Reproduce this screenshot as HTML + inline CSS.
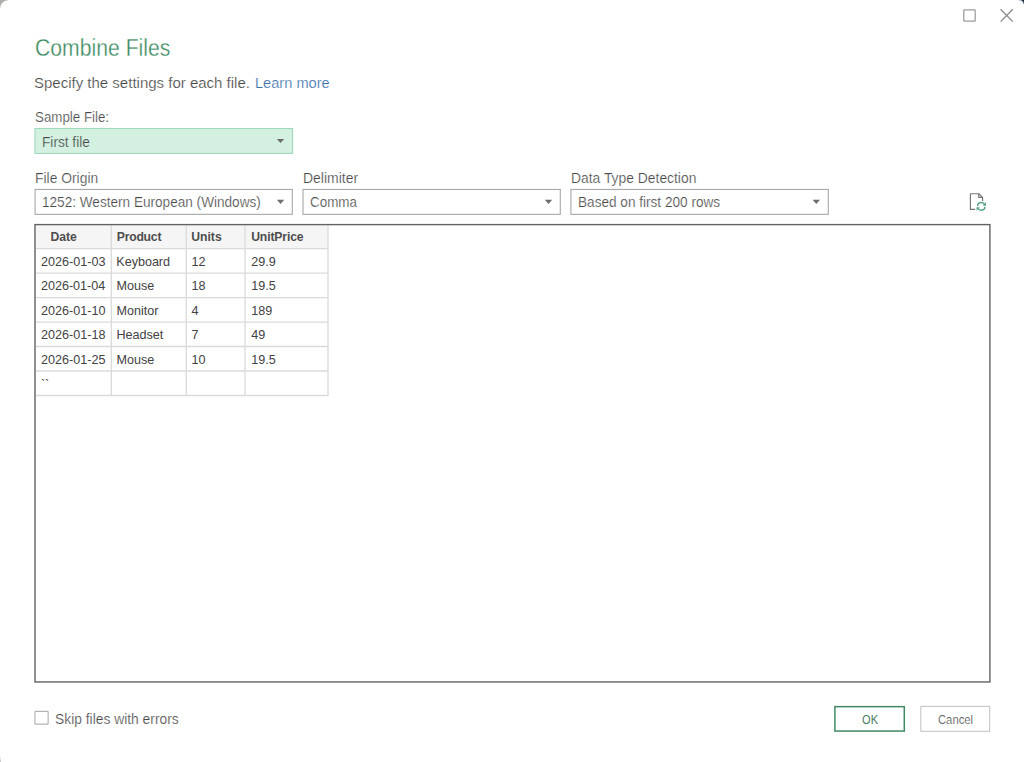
<!DOCTYPE html>
<html>
<head>
<meta charset="utf-8">
<title>Combine Files</title>
<style>
html,body{margin:0;padding:0;}
body{width:1024px;height:762px;overflow:hidden;background:#fff;font-family:"Liberation Sans", sans-serif;position:relative;}
#shapes{position:absolute;left:0;top:0;}
.t{position:absolute;white-space:nowrap;line-height:1;}
.t a{color:#3d72ad;text-decoration:none;}
</style>
</head>
<body>
<svg id="shapes" width="1024" height="762" viewBox="0 0 1024 762">
<!-- backdrop corners -->
<path d="M0 0 H8.8 A8.8 8.8 0 0 0 0 8.8 Z" fill="#b1aeab"/>
<path d="M1024 0 H1017.6 A7 7 0 0 1 1024 4.9 Z" fill="#8fa9d3"/><path d="M1024 0 H1021.3 A5 5 0 0 1 1024 4.3 Z" fill="#2a2a2a"/>
<path d="M0 762 V755 Q0.2 760 1.2 762 Z" fill="#c9c9c9"/>
<!-- window controls -->
<rect x="963.8" y="9.8" width="11.4" height="11.2" rx="0.6" fill="none" stroke="#9c9c9c" stroke-width="1.25"/>
<path d="M1000.6 9.2 L1012.8 21.6 M1012.8 9.2 L1000.6 21.6" fill="none" stroke="#8a8a8a" stroke-width="1.3"/>
<!-- dropdowns -->
<rect x="34.95" y="128.5" width="257.65" height="24.9" fill="#d3f0e0" stroke="#a2d9bc" stroke-width="1.1"/>
<rect x="35.1" y="189.45" width="257.2" height="24.9" fill="#fff" stroke="#ababab" stroke-width="1.15"/>
<rect x="303.0" y="189.45" width="257.3" height="24.9" fill="#fff" stroke="#ababab" stroke-width="1.15"/>
<rect x="570.9" y="189.45" width="257.4" height="24.9" fill="#fff" stroke="#ababab" stroke-width="1.15"/>
<path d="M276.8 139.0 L284.2 139.0 L280.5 143.1 Z" fill="#6e6e6e"/><path d="M276.85 199.8 L284.25 199.8 L280.55 203.9 Z" fill="#6e6e6e"/><path d="M544.8 199.8 L552.2 199.8 L548.5 203.9 Z" fill="#6e6e6e"/><path d="M812.5999999999999 199.8 L820.0 199.8 L816.3 203.9 Z" fill="#6e6e6e"/>
<!-- preview -->
<rect x="36.2" y="225.3" width="291.8" height="23.299999999999983" fill="#f5f5f5"/>
<g stroke="#dadada" stroke-width="1.3"><line x1="111.3" y1="225.2" x2="111.3" y2="396.08"/><line x1="186.25" y1="225.2" x2="186.25" y2="396.08"/><line x1="245.0" y1="225.2" x2="245.0" y2="396.08"/><line x1="328.0" y1="225.2" x2="328.0" y2="396.08"/><line x1="35.8" y1="248.60" x2="328.65" y2="248.60"/><line x1="35.8" y1="273.08" x2="328.65" y2="273.08"/><line x1="35.8" y1="297.56" x2="328.65" y2="297.56"/><line x1="35.8" y1="322.04" x2="328.65" y2="322.04"/><line x1="35.8" y1="346.52" x2="328.65" y2="346.52"/><line x1="35.8" y1="371.00" x2="328.65" y2="371.00"/><line x1="35.8" y1="395.48" x2="328.65" y2="395.48"/></g>
<rect x="35.0" y="224.6" width="954.9" height="457.35" fill="none" stroke="#636363" stroke-width="1.4"/>
<!-- refresh icon -->
<path d="M982.6 200.9 V197.3 L978.8 193.7 H970.4 V209.4 H975.2 M978.7 193.9 V197.4 H982.5" fill="none" stroke="#757575" stroke-width="1.15" stroke-linejoin="round"/>
<g fill="none" stroke="#55a583" stroke-width="1.4">
<path d="M977.5 205.9 A3.8 3.8 0 0 1 984.8 204.9"/>
<path d="M985.1 206.9 A3.8 3.8 0 0 1 977.8 207.9"/>
</g>
<path d="M986.1 202.3 L985.9 205.9 L982.7 205.2 Z" fill="#55a583"/>
<path d="M976.5 210.5 L976.7 206.9 L979.9 207.6 Z" fill="#55a583"/>
<!-- checkbox -->
<rect x="34.95" y="711.3" width="13.2" height="12.8" rx="0.6" fill="#fff" stroke="#b4b4b4" stroke-width="1.2"/>
<!-- buttons -->
<rect x="834.9" y="706.65" width="69.4" height="24.4" fill="#fff" stroke="#3f8a63" stroke-width="1.5"/>
<rect x="920.8" y="706.4" width="68.9" height="24.9" fill="#fff" stroke="#c6c6c6" stroke-width="1.1"/>
</svg>
<div class="t" id="title" style="left:35.0px;top:37.00px;font-size:23.5px;color:#3b8a5e;letter-spacing:0px;transform:scaleX(0.9015);transform-origin:0 0;-webkit-text-stroke:0.32px #fff;">Combine Files</div>
<div class="t" id="sub1" style="left:34.0px;top:75.00px;font-size:15.5px;color:#484848;letter-spacing:0px;transform:scaleX(0.9677);transform-origin:0 0;-webkit-text-stroke:0.22px #fff;">Specify the settings for each file.</div>
<div class="t" id="sub2" style="left:255.0px;top:75.00px;font-size:15.5px;color:#3d72ad;letter-spacing:0px;transform:scaleX(0.9422);transform-origin:0 0;-webkit-text-stroke:0.22px #fff;"><a>Learn more</a></div>
<div class="t" id="l0" style="left:35.0px;top:110.00px;font-size:14.3px;color:#484848;letter-spacing:0px;transform:scaleX(0.9321);transform-origin:0 0;-webkit-text-stroke:0.22px #fff;">Sample File:</div>
<div class="t" id="v0" style="left:42.0px;top:134.50px;font-size:14.3px;color:#484848;letter-spacing:0px;transform:scaleX(0.9557);transform-origin:0 0;-webkit-text-stroke:0.22px #d3f0e0;">First file</div>
<div class="t" id="l1" style="left:35.0px;top:171.00px;font-size:14.3px;color:#484848;letter-spacing:0px;transform:scaleX(0.9697);transform-origin:0 0;-webkit-text-stroke:0.22px #fff;">File Origin</div>
<div class="t" id="l2" style="left:303.0px;top:171.00px;font-size:14.3px;color:#484848;letter-spacing:0px;transform:scaleX(0.9764);transform-origin:0 0;-webkit-text-stroke:0.22px #fff;">Delimiter</div>
<div class="t" id="l3" style="left:571.0px;top:171.00px;font-size:14.3px;color:#484848;letter-spacing:0px;transform:scaleX(0.9698);transform-origin:0 0;-webkit-text-stroke:0.22px #fff;">Data Type Detection</div>
<div class="t" id="v1" style="left:42.0px;top:195.00px;font-size:14.3px;color:#484848;letter-spacing:0px;transform:scaleX(0.9504);transform-origin:0 0;-webkit-text-stroke:0.22px #fff;">1252: Western European (Windows)</div>
<div class="t" id="v2" style="left:310.0px;top:195.00px;font-size:14.3px;color:#484848;letter-spacing:0px;transform:scaleX(0.9398);transform-origin:0 0;-webkit-text-stroke:0.22px #fff;">Comma</div>
<div class="t" id="v3" style="left:578.0px;top:195.00px;font-size:14.3px;color:#484848;letter-spacing:0px;transform:scaleX(0.9512);transform-origin:0 0;-webkit-text-stroke:0.22px #fff;">Based on first 200 rows</div>
<div class="t" id="skip" style="left:55.0px;top:712.00px;font-size:14.1px;color:#484848;letter-spacing:0px;transform:scaleX(0.9811);transform-origin:0 0;-webkit-text-stroke:0.22px #fff;">Skip files with errors</div>
<div class="t" id="okt" style="left:862.0px;top:713.50px;font-size:12.2px;color:#4a7a63;letter-spacing:0px;transform:scaleX(0.9123);transform-origin:0 0;">OK</div>
<div class="t" id="cant" style="left:938.0px;top:713.50px;font-size:12.2px;color:#444;letter-spacing:0px;transform:scaleX(0.9231);transform-origin:0 0;-webkit-text-stroke:0.22px #fff;">Cancel</div>
<div class="t" id="h0" style="left:50.61px;top:231.00px;font-size:12.2px;color:#4e4e4e;letter-spacing:-0.086px;font-weight:bold;">Date</div>
<div class="t" id="h1" style="left:116.72px;top:231.00px;font-size:12.2px;color:#4e4e4e;letter-spacing:-0.218px;font-weight:bold;">Product</div>
<div class="t" id="h2" style="left:191.22px;top:231.00px;font-size:12.2px;color:#4e4e4e;letter-spacing:0px;font-weight:bold;">Units</div>
<div class="t" id="h3" style="left:251.16px;top:231.00px;font-size:12.2px;color:#4e4e4e;letter-spacing:-0.127px;font-weight:bold;">UnitPrice</div>
<div class="t" id="d00" style="left:41.05px;top:256.00px;font-size:12.6px;color:#424242;letter-spacing:0.006px;">2026-01-03</div>
<div class="t" id="d01" style="left:116.33px;top:256.00px;font-size:12.6px;color:#424242;letter-spacing:-0.03px;">Keyboard</div>
<div class="t" id="d02" style="left:191.4px;top:256.00px;font-size:12.6px;color:#424242;letter-spacing:0.0px;">12</div>
<div class="t" id="d03" style="left:251.2px;top:256.00px;font-size:12.6px;color:#424242;letter-spacing:0.0px;">29.9</div>
<div class="t" id="d10" style="left:41.05px;top:280.45px;font-size:12.6px;color:#424242;letter-spacing:-0.032px;">2026-01-04</div>
<div class="t" id="d11" style="left:116.43px;top:280.45px;font-size:12.6px;color:#424242;letter-spacing:0.0px;">Mouse</div>
<div class="t" id="d12" style="left:191.4px;top:280.45px;font-size:12.6px;color:#424242;letter-spacing:0.0px;">18</div>
<div class="t" id="d13" style="left:251.2px;top:280.45px;font-size:12.6px;color:#424242;letter-spacing:0.0px;">19.5</div>
<div class="t" id="d20" style="left:41.05px;top:304.90px;font-size:12.6px;color:#424242;letter-spacing:-0.005px;">2026-01-10</div>
<div class="t" id="d21" style="left:116.52px;top:304.90px;font-size:12.6px;color:#424242;letter-spacing:0.0px;">Monitor</div>
<div class="t" id="d22" style="left:191.4px;top:304.90px;font-size:12.6px;color:#424242;letter-spacing:0.0px;">4</div>
<div class="t" id="d23" style="left:251.2px;top:304.90px;font-size:12.6px;color:#424242;letter-spacing:0.0px;">189</div>
<div class="t" id="d30" style="left:41.05px;top:329.35px;font-size:12.6px;color:#424242;letter-spacing:0.008px;">2026-01-18</div>
<div class="t" id="d31" style="left:116.43px;top:329.35px;font-size:12.6px;color:#424242;letter-spacing:0.0px;">Headset</div>
<div class="t" id="d32" style="left:191.4px;top:329.35px;font-size:12.6px;color:#424242;letter-spacing:0.0px;">7</div>
<div class="t" id="d33" style="left:251.2px;top:329.35px;font-size:12.6px;color:#424242;letter-spacing:0.0px;">49</div>
<div class="t" id="d40" style="left:41.05px;top:353.80px;font-size:12.6px;color:#424242;letter-spacing:0.015px;">2026-01-25</div>
<div class="t" id="d41" style="left:116.43px;top:353.80px;font-size:12.6px;color:#424242;letter-spacing:0.0px;">Mouse</div>
<div class="t" id="d42" style="left:191.4px;top:353.80px;font-size:12.6px;color:#424242;letter-spacing:0.0px;">10</div>
<div class="t" id="d43" style="left:251.2px;top:353.80px;font-size:12.6px;color:#424242;letter-spacing:0.0px;">19.5</div>
<div class="t" id="bt" style="left:41.05px;top:377.50px;font-size:13px;color:#3a3a3a;letter-spacing:-0.3px;">``</div>
</body>
</html>
